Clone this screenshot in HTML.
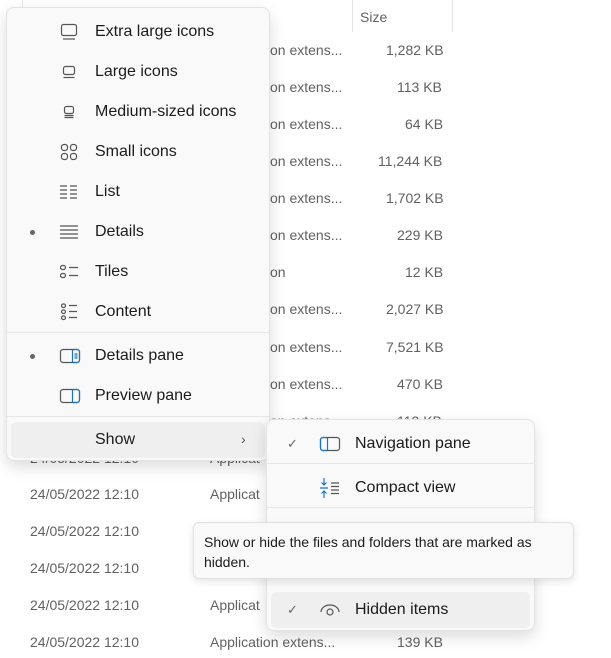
<!DOCTYPE html>
<html><head><meta charset="utf-8"><style>
*{margin:0;padding:0;box-sizing:border-box}
body{width:611px;height:658px;overflow:hidden;background:#fff;font-family:"Liberation Sans",sans-serif;position:relative}
.bg{position:absolute;font-size:14px;color:#616161;white-space:nowrap}
.vl{position:absolute;top:0;height:32px;width:1px;background:#e5e5e5}
.menu{position:absolute;background:#f9f9f9;border:1px solid #e3e3e3;border-radius:8px;box-shadow:0 6px 16px rgba(0,0,0,.14)}
.it{position:absolute;left:0;right:0;height:40px;font-size:16px;color:#1b1b1b;line-height:40px}
.it .t{position:absolute;left:88px}
.it svg{position:absolute;left:52px;top:10px}
.dot{position:absolute;left:23px;top:18px;width:5px;height:5px;border-radius:50%;background:#666}
.sep{position:absolute;left:0;right:0;height:1px;background:#e6e6e6}
.hl{position:absolute;background:#efefef;border-radius:5px}
</style></head><body>
<div class="bg" style="left:360px;top:9px">Size</div>
<div class="vl" style="left:352px"></div><div class="vl" style="left:452px"></div>
<div class="vl" style="left:22px"></div>
<!-- rows -->
<div id="rows"></div>
<div class="bg" style="left:270px;top:42px">on extens...</div><div class="bg" style="left:386px;top:42px">1,282 KB</div>
<div class="bg" style="left:270px;top:79px">on extens...</div><div class="bg" style="left:397px;top:79px">113 KB</div>
<div class="bg" style="left:270px;top:116px">on extens...</div><div class="bg" style="left:405px;top:116px">64 KB</div>
<div class="bg" style="left:270px;top:153px">on extens...</div><div class="bg" style="left:378px;top:153px">11,244 KB</div>
<div class="bg" style="left:270px;top:190px">on extens...</div><div class="bg" style="left:386px;top:190px">1,702 KB</div>
<div class="bg" style="left:270px;top:227px">on extens...</div><div class="bg" style="left:397px;top:227px">229 KB</div>
<div class="bg" style="left:270px;top:264px">on</div><div class="bg" style="left:405px;top:264px">12 KB</div>
<div class="bg" style="left:270px;top:301px">on extens...</div><div class="bg" style="left:386px;top:301px">2,027 KB</div>
<div class="bg" style="left:270px;top:339px">on extens...</div><div class="bg" style="left:386px;top:339px">7,521 KB</div>
<div class="bg" style="left:270px;top:376px">on extens...</div><div class="bg" style="left:397px;top:376px">470 KB</div>
<div class="bg" style="left:270px;top:413px">on extens...</div><div class="bg" style="left:397px;top:413px">113 KB</div>
<div class="bg" style="left:30px;top:450px">24/05/2022 12:10</div><div class="bg" style="left:210px;top:450px">Applicat</div>
<div class="bg" style="left:30px;top:486px">24/05/2022 12:10</div><div class="bg" style="left:210px;top:486px">Applicat</div>
<div class="bg" style="left:30px;top:523px">24/05/2022 12:10</div><div class="bg" style="left:210px;top:523px">Applicat</div>
<div class="bg" style="left:30px;top:560px">24/05/2022 12:10</div><div class="bg" style="left:210px;top:560px">Applicat</div>
<div class="bg" style="left:30px;top:597px">24/05/2022 12:10</div><div class="bg" style="left:210px;top:597px">Applicat</div>
<div class="bg" style="left:30px;top:634px">24/05/2022 12:10</div><div class="bg" style="left:210px;top:634px">Application extens...</div><div class="bg" style="left:397px;top:634px">139 KB</div>

<div class="menu" style="left:6px;top:7px;width:264px;height:454px">
 <div class="it" style="top:4px"><svg width="20" height="20" viewBox="0 0 20 20" fill="none" stroke="#555" stroke-width="1.2"><rect x="2.5" y="2.5" width="15" height="11" rx="2"/><path d="M4 17h12"/></svg><span class="t">Extra large icons</span></div>
 <div class="it" style="top:44px"><svg width="20" height="20" viewBox="0 0 20 20" fill="none" stroke="#555" stroke-width="1.2"><rect x="4.5" y="4.5" width="11" height="8" rx="2"/><path d="M4.5 15.5h11"/></svg><span class="t">Large icons</span></div>
 <div class="it" style="top:84px"><svg width="20" height="20" viewBox="0 0 20 20" fill="none" stroke="#555" stroke-width="1.2"><rect x="5.5" y="4.5" width="9" height="7" rx="2"/><path d="M5.5 13.5h9M5.5 15.5h9"/></svg><span class="t">Medium-sized icons</span></div>
 <div class="it" style="top:124px"><svg width="20" height="20" viewBox="0 0 20 20" fill="none" stroke="#555" stroke-width="1.2"><rect x="2.5" y="2.5" width="6" height="6" rx="2.5"/><rect x="11.5" y="2.5" width="6" height="6" rx="2.5"/><rect x="2.5" y="11.5" width="6" height="6" rx="2.5"/><rect x="11.5" y="11.5" width="6" height="6" rx="2.5"/></svg><span class="t">Small icons</span></div>
 <div class="it" style="top:164px"><svg width="20" height="20" viewBox="0 0 20 20" fill="none" stroke="#555" stroke-width="1.2"><path d="M1 4h7M1 8h7M1 12h7M1 16h7M11 4h7M11 8h7M11 12h7M11 16h7"/></svg><span class="t">List</span></div>
 <div class="it" style="top:204px"><span class="dot"></span><svg width="20" height="20" viewBox="0 0 20 20" fill="none" stroke="#555" stroke-width="1.2"><path d="M1 4h18M1 8h18M1 12h18M1 16h18"/></svg><span class="t">Details</span></div>
 <div class="it" style="top:244px"><svg width="20" height="20" viewBox="0 0 20 20" fill="none" stroke="#555" stroke-width="1.2"><rect x="1.5" y="3.5" width="5" height="4" rx="2"/><rect x="1.5" y="11.5" width="5" height="4" rx="2"/><path d="M10 5.5h9M10 13.5h9"/></svg><span class="t">Tiles</span></div>
 <div class="it" style="top:284px"><svg width="20" height="20" viewBox="0 0 20 20" fill="none" stroke="#555" stroke-width="1.2"><rect x="2.5" y="2" width="4" height="3.5" rx="1.7"/><rect x="2.5" y="8" width="4" height="3.5" rx="1.7"/><rect x="2.5" y="14" width="4" height="3.5" rx="1.7"/><path d="M10 3.5h8M10 9.5h8M10 15.5h8"/></svg><span class="t">Content</span></div>
 <div class="sep" style="top:324px"></div>
 <div class="it" style="top:328px"><span class="dot"></span><svg width="22" height="20" viewBox="0 0 22 20" fill="none" stroke-width="1.2"><rect x="1.5" y="3.5" width="19" height="13" rx="2.5" stroke="#555"/><path d="M13.5 3.5v13" stroke="#1a73c8"/><path d="M13.5 3.5h4.5a2.5 2.5 0 0 1 2.5 2.5v8a2.5 2.5 0 0 1-2.5 2.5h-4.5" stroke="#1a73c8"/><path d="M15.5 8h3M15.5 10h3M15.5 12h3" stroke="#1a73c8"/></svg><span class="t">Details pane</span></div>
 <div class="it" style="top:368px"><svg width="22" height="20" viewBox="0 0 22 20" fill="none" stroke-width="1.2"><rect x="1.5" y="3.5" width="19" height="13" rx="2.5" stroke="#555"/><path d="M13.5 3.5v13M13.5 3.5h4.5a2.5 2.5 0 0 1 2.5 2.5v8a2.5 2.5 0 0 1-2.5 2.5h-4.5" stroke="#1a73c8"/></svg><span class="t">Preview pane</span></div>
 <div class="sep" style="top:408px"></div>
 <div class="hl" style="left:4px;top:414px;width:254px;height:36px"></div>
 <div class="it" style="top:412px"><span class="t">Show</span><span style="position:absolute;left:234px;top:-1px;color:#555;font-size:14px">&#x203A;</span></div>
</div>

<div class="menu" style="left:266px;top:419px;width:269px;height:212px">
 <div class="it" style="top:4px"><span style="position:absolute;left:20px;color:#666;font-size:13px">&#x2713;</span><svg style="left:52px" width="22" height="20" viewBox="0 0 22 20" fill="none" stroke-width="1.2"><rect x="1.5" y="3.5" width="19" height="13" rx="2.5" stroke="#555"/><path d="M8.5 3.5v13M8.5 3.5H4a2.5 2.5 0 0 0-2.5 2.5v8A2.5 2.5 0 0 0 4 16.5h4.5" stroke="#1a73c8"/></svg><span class="t">Navigation pane</span></div>
 <div class="sep" style="top:43px"></div>
 <div class="it" style="top:48px"><svg width="22" height="20" viewBox="0 0 22 20" fill="none" stroke-width="1.2"><path d="M5 0v7M2.5 4.5L5 7l2.5-2.5M5 20v-7M2.5 15.5L5 13l2.5 2.5M1 10h8" stroke="#1a73c8"/><path d="M12 5h8M12 8.5h8M12 12h8M12 15.5h8" stroke="#555"/></svg><span class="t">Compact view</span></div>
 <div class="sep" style="top:87px"></div>
 <div class="hl" style="left:4px;top:172px;width:259px;height:36px"></div>
 <div class="it" style="top:170px"><span style="position:absolute;left:20px;color:#666;font-size:13px">&#x2713;</span><svg style="left:52px" width="22" height="20" viewBox="0 0 22 20" fill="none" stroke="#555" stroke-width="1.2"><path d="M2 12a9 7 0 0 1 18 0"/><circle cx="11" cy="12" r="3"/></svg><span class="t">Hidden items</span></div>
</div>

<div style="position:absolute;left:193px;top:522px;width:381px;height:57px;background:#f9f9f9;border:1px solid #e0e0e0;border-radius:6px;box-shadow:0 3px 8px rgba(0,0,0,.1);font-size:14px;color:#1b1b1b;padding:9px 10px;line-height:20px">Show or hide the files and folders that are marked as hidden.</div>
</body></html>
